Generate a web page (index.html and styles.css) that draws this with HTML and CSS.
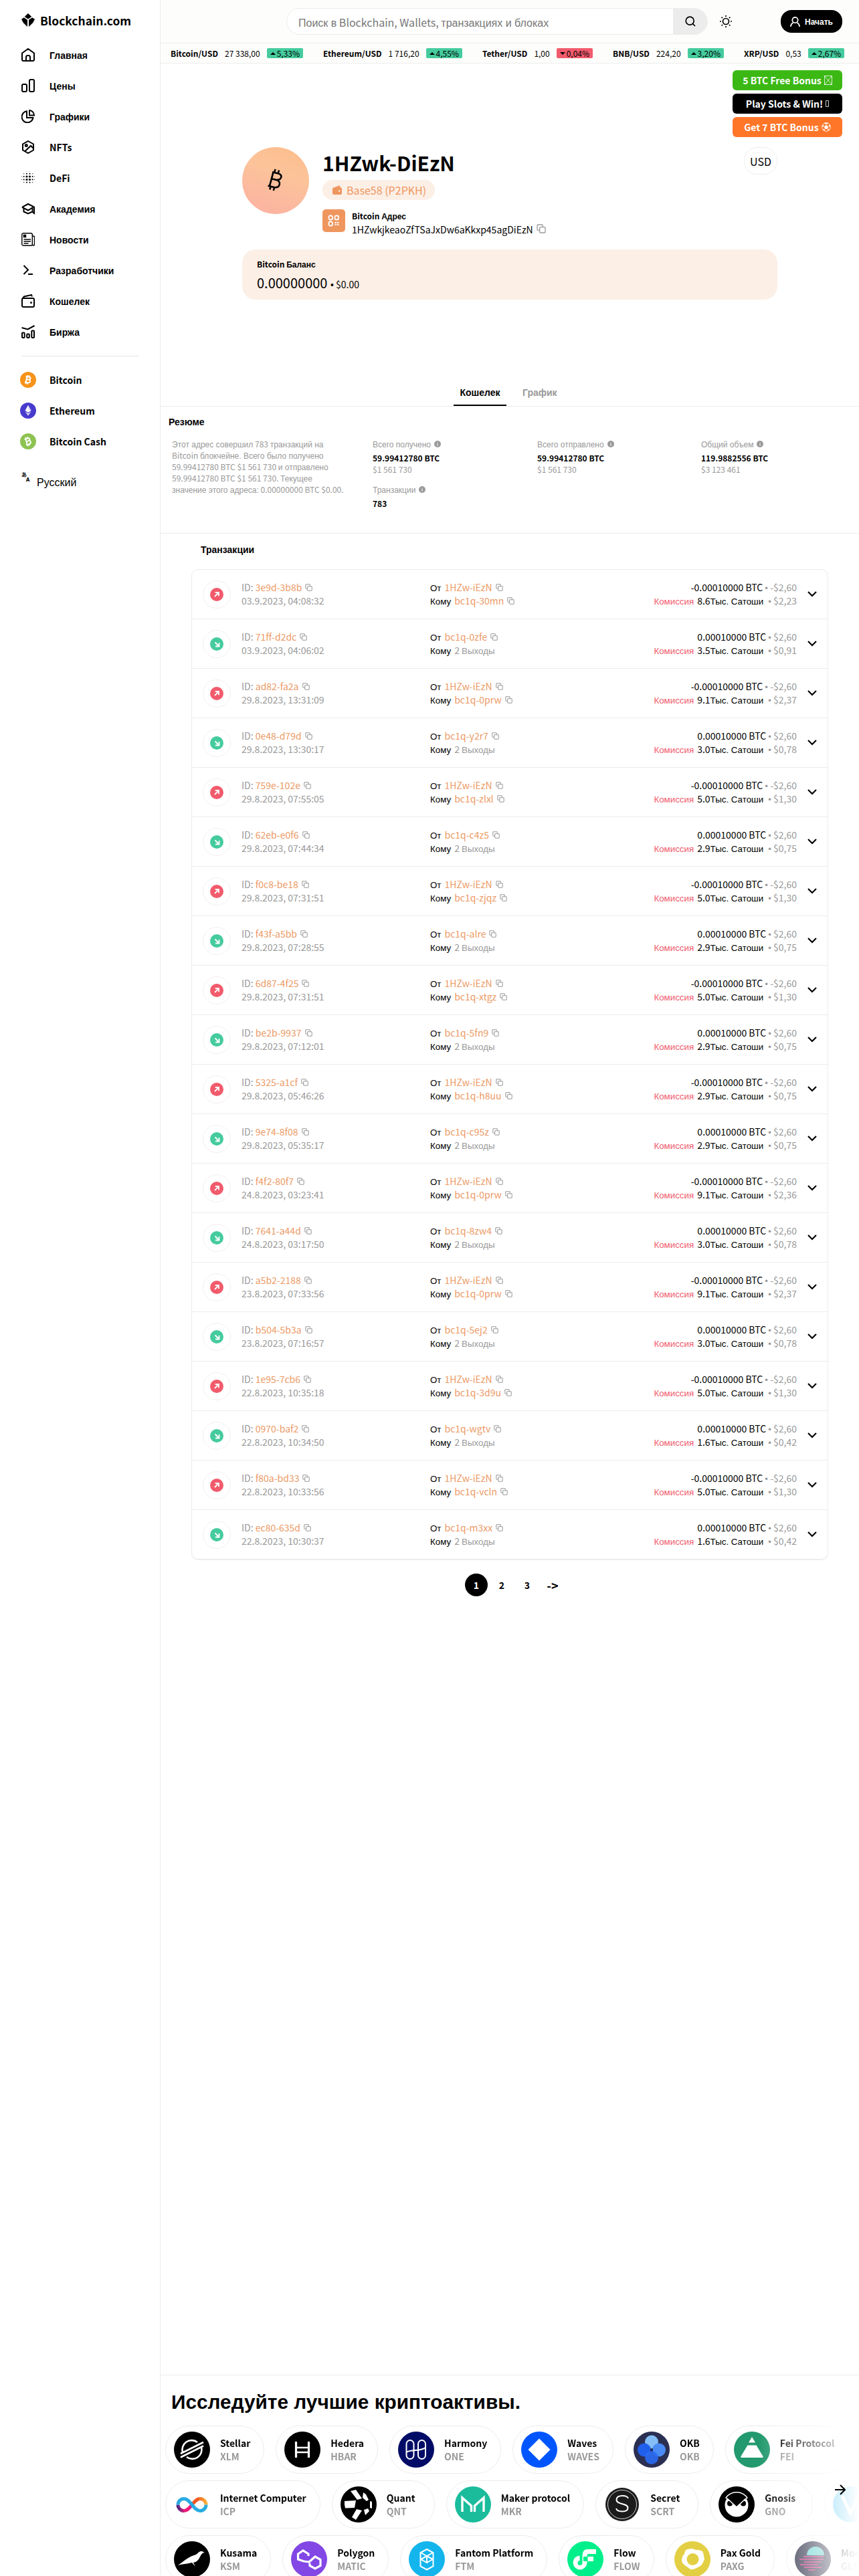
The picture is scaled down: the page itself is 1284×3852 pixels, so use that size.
FILE: index.html
```html
<!DOCTYPE html>
<html lang="ru">
<head>
  <meta charset="UTF-8" />
  <meta name="viewport" content="width=device-width, initial-scale=1" />
  <title>1HZwk-DiEzN | Blockchain.com</title>
  <link rel="stylesheet" href="styles.css">
</head>
<body>

<svg class="sprite" aria-hidden="true">
  <symbol id="copy" viewBox="0 0 14 14"><rect x="4.7" y="4.7" width="8.3" height="8.3" rx="1.2"/><path d="M9.3 4.5V2.2A1.2 1.2 0 0 0 8.1 1H2.2A1.2 1.2 0 0 0 1 2.200V8.1a1.200 1.200 0 0 0 1.200 1.200h2.300"/></symbol>
  <symbol id="info" viewBox="0 0 10 10"><circle cx="5" cy="5" r="5" fill="#999"/><path d="M5 4.500v3M5 2.400v1" stroke="#fff" stroke-width="1.200"/></symbol>
  <symbol id="out" viewBox="0 0 20 20"><circle cx="10" cy="10" r="10" fill="#f15b6c"/><path d="M7 13l6-6M7.700 7H13v5.300" fill="none" stroke="#fff" stroke-width="1.800"/></symbol>
  <symbol id="in" viewBox="0 0 20 20"><circle cx="10" cy="10" r="10" fill="#45cb9e"/><path d="M7.500 7.500l6 6M13.500 8v5.500H8" fill="none" stroke="#fff" stroke-width="1.800"/></symbol>
</svg>

<aside class="sidebar">
  <a class="logo">
    <svg width="20" height="20" viewBox="0 0 20 20"><path d="M10 0l5.300 5L10 8.400 4.700 5zM3.800 6.300L9 9.800V20L2.800 14 0 8.700zM16.200 6.300L20 8.700 17.200 14 11 20V9.800z"/></svg>
    Blockchain.com
  </a>
  <nav class="menu">
    <a><svg viewBox="0 0 20 20"><path d="M1 7.500L10 1l9 6.500V17a2 2 0 0 1-2 2H3a2 2 0 0 1-2-2zM7 19v-6a2.500 2.500 0 0 1 2.500-2h1A2.500 2.500 0 0 1 13 13v6"/></svg><span class="cy">Главная</span></a>
    <a><svg viewBox="0 0 20 20"><rect x="1" y="8" width="7" height="11" rx="2"/><rect x="12" y="1" width="7" height="18" rx="2"/></svg><span class="cy">Цены</span></a>
    <a><svg viewBox="0 0 20 20"><path d="M8 2.300A8.500 8.500 0 1 0 17.500 12H8zM12 1v7.500h7A7.500 7.500 0 0 0 12 1z"/></svg><span class="cy">Графики</span></a>
    <a><svg viewBox="0 0 20 20"><path d="M10 1l8 4.500v9L10 19l-8-4.500v-9zM5 16.500L14 8l4 4"/><circle cx="7.300" cy="7.500" r="1.500"/></svg>NFTs</a>
    <a><svg viewBox="0 0 20 20" class="solid"><circle cx="8" cy="8" r="1.600"/><circle cx="12.500" cy="8" r="1.600"/><circle cx="8" cy="12.500" r="1.600"/><circle cx="12.500" cy="12.500" r="1.600"/><circle cx="3.700" cy="8" r="1"/><circle cx="3.700" cy="12.500" r="1"/><circle cx="16.700" cy="8" r="1"/><circle cx="16.700" cy="12.500" r="1"/><circle cx="8" cy="3.700" r="1"/><circle cx="12.500" cy="3.700" r="1"/><circle cx="8" cy="16.700" r="1"/><circle cx="12.500" cy="16.700" r="1"/><circle cx="3.700" cy="3.700" r=".6"/><circle cx="16.700" cy="3.700" r=".6"/><circle cx="3.700" cy="16.700" r=".6"/><circle cx="16.700" cy="16.700" r=".6"/><circle cx=".6" cy="8" r=".5"/><circle cx=".6" cy="12.500" r=".5"/><circle cx="19.500" cy="8" r=".5"/><circle cx="19.500" cy="12.500" r=".5"/><circle cx="8" cy=".6" r=".4"/><circle cx="12.500" cy=".6" r=".4"/></svg>DeFi</a>
    <a><svg viewBox="0 0 20 20"><path d="M1 7.800L10 3l9 4.500V17l-2.500-2M1 7.800L10 12.500l6.500-4V16M3.500 10v4.500L10 17.500l6.500-3"/></svg><span class="cy">Академия</span></a>
    <a><svg viewBox="0 0 20 20" class="thin"><rect x=".8" y=".8" width="15.500" height="18.400" rx="2"/><path d="M16.500 5H18a1.500 1.500 0 0 1 1.500 1.500v11a1.500 1.500 0 0 1-3 0M3.500 10h10.500M3.500 13h10.500M3.500 16h7"/><path d="M3.500 3.500h3v3h-3z" fill="#000"/></svg><span class="cy">Новости</span></a>
    <a><svg viewBox="0 0 20 20"><path d="M3.500 3l6.500 6.500L3.500 16M10 16h7"/></svg><span class="cy">Разработчики</span></a>
    <a><svg viewBox="0 0 20 20"><rect x="1" y="6" width="18" height="13" rx="2"/><path d="M1.500 6.500L4 3.500 15 1l1 2.500"/><circle cx="14.500" cy="12.500" r=".6"/></svg><span class="cy">Кошелек</span></a>
    <a><svg viewBox="0 0 20 20"><rect x="1" y="11.500" width="3.700" height="7.500" rx="1"/><rect x="8.200" y="13.500" width="3.600" height="5.500" rx="1"/><rect x="15.300" y="8.500" width="3.700" height="10.500" rx="1"/><path d="M.5 4l9 2.500L19.500 1"/></svg><span class="cy">Биржа</span></a>
  </nav>
  <nav class="menu chains">
    <a><svg viewBox="0 0 24 24"><circle cx="12" cy="12" r="12" fill="#f7931a"/><path class="b" d="M8.600 6.700l5.200 1c2.800.6 2.300 4-.8 3.800 3.300.4 2.800 5-1 4.800l-5-1M10.300 7.200l-1.700 8.500M9.500 11.200l3.700.4M11.400 5l-.5 2.200M14 5.500l-.5 2.200M8.900 15.800l-.5 2.400M11.500 16.200l-.5 2.400"/></svg>Bitcoin</a>
    <a><svg viewBox="0 0 24 24"><circle cx="12" cy="12" r="12" fill="#473bcd"/><path fill="#fff" d="M12 4l4.500 8L12 14.800 7.500 12z"/><path fill="#d9d7f5" d="M12 4v6.200l4.500 1.800zM7.500 13.200l4.500 2.700 4.500-2.700L12 19.800z"/></svg>Ethereum</a>
    <a><svg viewBox="0 0 24 24"><circle cx="12" cy="12" r="12" fill="#8dc351"/><path class="b" transform="rotate(-27 12 12)" d="M8.600 6.700l5.200 1c2.800.6 2.300 4-.8 3.800 3.300.4 2.800 5-1 4.800l-5-1M10.300 7.200l-1.700 8.500M9.500 11.200l3.700.4M11.400 5l-.5 2.200M14 5.500l-.5 2.200M8.900 15.800l-.5 2.400M11.500 16.200l-.5 2.400"/></svg>Bitcoin Cash</a>
  </nav>
  <div class="lang">
    <span class="lang-icon"><i>あ</i><b>A</b></span>
    <span class="lang-name">Русский</span>
  </div>
</aside>

<main class="main">
  <header class="topbar">
    <div class="search">
      <span class="search-text"><span class="cy">Поиск в</span> Blockchain, Wallets, <span class="cy">транзакциях и блоках</span></span>
      <span class="search-btn"><svg width="16" height="16" viewBox="0 0 16 16"><circle cx="7.200" cy="7.200" r="6"/><path d="M11.600 11.600L15 15"/></svg></span>
    </div>
    <svg class="sun" width="18" height="18" viewBox="0 0 18 18"><circle cx="9" cy="9" r="4.500"/><path d="M9 0v2M9 16v2M0 9h2M16 9h2M2.600 2.600L4 4M14 14l1.400 1.400M15.400 2.600L14 4M4 14l-1.400 1.400"/></svg>
    <a class="start"><svg width="15" height="15" viewBox="0 0 15 15"><circle cx="7.500" cy="5" r="4.200"/><path d="M.8 14.800c.3-3 1.700-4.800 3.700-5.800M14.200 14.800c-.3-3-1.700-4.800-3.700-5.800"/></svg><span class="cy">Начать</span></a>
  </header>

  <div class="ticker">
    <span class="tick"><b>Bitcoin/USD</b><span>27 338,00</span><em>5,33%</em></span>
    <span class="tick"><b>Ethereum/USD</b><span>1 716,20</span><em>4,55%</em></span>
    <span class="tick"><b>Tether/USD</b><span>1,00</span><em class="down">0,04%</em></span>
    <span class="tick"><b>BNB/USD</b><span>224,20</span><em>3,20%</em></span>
    <span class="tick"><b>XRP/USD</b><span>0,53</span><em>2,67%</em></span>
  </div>

  <div class="ads">
    <a class="ad green">5 BTC Free Bonus <svg width="12" height="14" viewBox="0 0 12 14"><path d="M.5.5h11v13H.5zM.5.5l11 13M11.500.5l-11 13"/></svg></a>
    <a class="ad black">Play Slots &amp; Win! <svg width="5" height="10" viewBox="0 0 5 10"><path d="M.5.5h4v9h-4z"/></svg></a>
    <a class="ad orange">Get 7 BTC Bonus <svg width="14" height="14" viewBox="0 0 14 14"><circle cx="7" cy="7" r="6.400"/><path fill="#fff" d="M7 4.300l2.700 2-1 3.100H5.300l-1-3.100zM4.500 1.200h5L7 2.800zM.8 5.500l1.900-1.400.1 2.300zM13.200 5.500l-1.900-1.400-.1 2.300zM3 11.800l.4-2 1.500 1.600zM11 11.800l-.4-2-1.500 1.600z"/></svg></a>
  </div>

  <section class="hero">
    <div class="coin"><svg width="26" height="36" viewBox="0 0 26 36"><path d="M8 5.200l9 2.300c7 2 5 9.500-2 9.500M7 15.200l8 2c6.500 2.500 4.500 12-3.500 11l-10-2.500M9.500 5.700L4 26.200M12.500 1l-1.200 4.700M18 2.500l-1.200 4.700M5.500 27l-1.200 4.500M11 28.500l-1.200 4.500"/></svg></div>
    <div class="hero-info">
      <h1>1HZwk-DiEzN</h1>
      <span class="type"><svg width="14" height="14" viewBox="0 0 14 14"><path fill="#ef965f" d="M2 3.500L10.500.3 12 3.500a2 2 0 0 1 2 2V12a2 2 0 0 1-2 2H2a2 2 0 0 1-2-2V5.500a2 2 0 0 1 2-2z"/><circle cx="10" cy="8.500" r="1.200" fill="#fcefe6"/></svg>Base58 (P2PKH)</span>
      <div class="address">
        <span class="qr"><svg width="18" height="18" viewBox="0 0 18 18"><rect x="1.500" y="1.500" width="5.500" height="6" rx="2"/><rect x="10.500" y="1.500" width="5.500" height="6" rx="2"/><rect x="1.500" y="10.500" width="5.500" height="6" rx="2"/><path d="M10.500 12h2.500M14 12h2.500M10.500 15.200h2.500M14 15.200h2.500"/></svg></span>
        <div>
          <b>Bitcoin <span class="cy">Адрес</span></b>
          <p>1HZwkjkeaoZfTSaJxDw6aKkxp45agDiEzN <svg class="copy" width="14" height="14"><use href="#copy"/></svg></p>
        </div>
      </div>
    </div>
    <span class="currency">USD</span>
    <div class="balance">
      <b>Bitcoin <span class="cy">Баланс</span></b>
      <p>0.00000000 <small><span class="cy">•</span> $0.00</small></p>
    </div>
  </section>

  <div class="tabs">
    <a class="tab active">Кошелек</a>
    <a class="tab">График</a>
  </div>

  <section class="summary">
    <h2>Резюме</h2>
    <div class="stats">
      <p class="about"><span class="cy">Этот адрес совершил</span> 783 <span class="cy">транзакций на</span><br>Bitcoin <span class="cy">блокчейне. Всего было получено</span><br>59.99412780 BTC $1 561 730 <span class="cy">и отправлено</span><br>59.99412780 BTC $1 561 730. <span class="cy">Текущее</span><br><span class="cy">значение этого адреса:</span> 0.00000000 BTC $0.00.</p>
      <div class="stat">
        <p><span class="cy">Всего получено</span><svg width="10" height="10"><use href="#info"/></svg></p>
        <b>59.99412780 BTC</b>
        <p>$1 561 730</p>
        <p class="second"><span class="cy">Транзакции</span><svg width="10" height="10"><use href="#info"/></svg></p>
        <b>783</b>
      </div>
      <div class="stat">
        <p><span class="cy">Всего отправлено</span><svg width="10" height="10"><use href="#info"/></svg></p>
        <b>59.99412780 BTC</b>
        <p>$1 561 730</p>
      </div>
      <div class="stat">
        <p><span class="cy">Общий объем</span><svg width="10" height="10"><use href="#info"/></svg></p>
        <b>119.9882556 BTC</b>
        <p>$3 123 461</p>
      </div>
    </div>
  </section>

  <section class="transactions">
    <h2>Транзакции</h2>
    <div id="tx-list"></div>
    <div class="pages">
      <a class="current">1</a><a>2</a><a>3</a><a class="forward">-&gt;</a>
    </div>
  </section>

  <section class="explore">
    <h2>Исследуйте лучшие криптоактивы.</h2>
    <div class="assets" id="assets"></div>
    <svg class="next" width="16" height="16" viewBox="0 0 16 16"><path d="M0 8h15M8 1l7 7-7 7"/></svg>
  </section>
</main>

<script>
  // id, date, other side, fee (thousand satoshi), fee in USD, outgoing
  const transactions = [
    ["3e9d-3b8b", "03.9.2023, 04:08:32", "bc1q-30mn", "8.6", "2,23", true],
    ["71ff-d2dc", "03.9.2023, 04:06:02", "bc1q-0zfe", "3.5", "0,91", false],
    ["ad82-fa2a", "29.8.2023, 13:31:09", "bc1q-0prw", "9.1", "2,37", true],
    ["0e48-d79d", "29.8.2023, 13:30:17", "bc1q-y2r7", "3.0", "0,78", false],
    ["759e-102e", "29.8.2023, 07:55:05", "bc1q-zlxl", "5.0", "1,30", true],
    ["62eb-e0f6", "29.8.2023, 07:44:34", "bc1q-c4z5", "2.9", "0,75", false],
    ["f0c8-be18", "29.8.2023, 07:31:51", "bc1q-zjqz", "5.0", "1,30", true],
    ["f43f-a5bb", "29.8.2023, 07:28:55", "bc1q-alre", "2.9", "0,75", false],
    ["6d87-4f25", "29.8.2023, 07:31:51", "bc1q-xtgz", "5.0", "1,30", true],
    ["be2b-9937", "29.8.2023, 07:12:01", "bc1q-5fn9", "2.9", "0,75", false],
    ["5325-a1cf", "29.8.2023, 05:46:26", "bc1q-h8uu", "2.9", "0,75", true],
    ["9e74-8f08", "29.8.2023, 05:35:17", "bc1q-c95z", "2.9", "0,75", false],
    ["f4f2-80f7", "24.8.2023, 03:23:41", "bc1q-0prw", "9.1", "2,36", true],
    ["7641-a44d", "24.8.2023, 03:17:50", "bc1q-8zw4", "3.0", "0,78", false],
    ["a5b2-2188", "23.8.2023, 07:33:56", "bc1q-0prw", "9.1", "2,37", true],
    ["b504-5b3a", "23.8.2023, 07:16:57", "bc1q-5ej2", "3.0", "0,78", false],
    ["1e95-7cb6", "22.8.2023, 10:35:18", "bc1q-3d9u", "5.0", "1,30", true],
    ["0970-baf2", "22.8.2023, 10:34:50", "bc1q-wgtv", "1.6", "0,42", false],
    ["f80a-bd33", "22.8.2023, 10:33:56", "bc1q-vcln", "5.0", "1,30", true],
    ["ec80-635d", "22.8.2023, 10:30:37", "bc1q-m3xx", "1.6", "0,42", false]
  ];

  const copy = `<svg class="copy" width="11" height="11"><use href="#copy"/></svg>`;

  document.getElementById("tx-list").innerHTML = transactions.map(([id, date, peer, fee, usd, out]) => `
    <div class="tx">
      <span class="tx-icon"><svg width="20" height="20"><use href="#${out ? "out" : "in"}"/></svg></span>
      <div class="tx-id">
        <p>ID: <a>${id}</a>${copy}</p>
        <p>${date}</p>
      </div>
      <div class="tx-peers">
        <p><span class="cy">От</span><a>${out ? "1HZw-iEzN" : peer}</a>${copy}</p>
        <p><span class="cy">Кому</span>${out ? `<a>${peer}</a>${copy}` : `<i>2 <span class="cy">Выходы</span></i>`}</p>
      </div>
      <div class="tx-sum">
        <p>${out ? "-" : ""}0.00010000 BTC <i><span class="cy">•</span> ${out ? "-" : ""}$2,60</i></p>
        <p><span class="cy fee">Комиссия</span>${fee}<span class="cy">Тыс. Сатоши</span><i class="gap"><span class="cy">•</span> $${usd}</i></p>
      </div>
      <svg class="chevron" width="14" height="9" viewBox="0 0 14 9"><path d="M1 1l6 6 6-6"/></svg>
    </div>`).join("");

  const disc = color => `<circle cx="27" cy="27" r="27" fill="${color}"/>`;
  const line = (d, w, color = "#fff") => `<path d="${d}" fill="none" stroke="${color}" stroke-width="${w}"/>`;

  const assets = [
    [
      ["Stellar", "XLM", disc("#000") + line("M13 31a14 14 0 0 1 22-15M41 23a14 14 0 0 1-22 15", 2.6) + line("M10 33L44 16M10 38.500L44 21.500", 2.6)],
      ["Hedera", "HBAR", disc("#000") + line("M17.500 15v24M36.500 15v24", 3.2) + line("M17 24h20M17 31h20", 2.4)],
      ["Harmony", "ONE", disc("#000c66") + `<rect x="12.500" y="13" width="11" height="28" rx="5.500" fill="none" stroke="#fff" stroke-width="2"/><rect x="30" y="13" width="11" height="28" rx="5.500" fill="none" stroke="#fff" stroke-width="2"/>` + line("M12.500 31c6-5 22-1 28.500-7", 2)],
      ["Waves", "WAVES", disc("#0055ff") + `<path d="M27 10.500L43.500 27 27 43.500 10.500 27z" fill="#fff"/>`],
      ["OKB", "OKB", disc("#2b2f52") + `<circle cx="27" cy="15.500" r="10" fill="#85bef6"/><circle cx="38" cy="27.500" r="10" fill="#4a8cf4"/><circle cx="16" cy="27.500" r="10" fill="#205fec"/><circle cx="27" cy="39" r="10" fill="#2a6bf3" opacity=".9"/><path d="M25 25.500h4v4h-4z" fill="#22315f"/>`],
      ["Fei Protocol", "FEI", disc("#22996e") + `<path d="M27 8l5 8.500H22zM20.500 20.500h13l10 16.500a1.200 1.200 0 0 1-1 2H11.500a1.200 1.200 0 0 1-1-2z" fill="#fff"/>`]
    ],
    [
      ["Internet Computer", "ICP", `<linearGradient id="icp1"><stop stop-color="#522785"/><stop offset=".5" stop-color="#ed1e79"/></linearGradient><linearGradient id="icp2"><stop offset=".4" stop-color="#f15a24"/><stop offset="1" stop-color="#fbb03b"/></linearGradient>` + line("M27 27.500c-4 5-7 9-12 9a9 9 0 0 1-9-9", 5, "url(#icp1)") + line("M27 27.500c4-5 7-9 12-9a9 9 0 0 1 9 9", 5, "url(#icp2)") + line("M6 27.500a9 9 0 0 1 9-9c10 0 14 18 24 18a9 9 0 0 0 9-9", 5, "#29abe2")],
      ["Quant", "QNT", disc("#000") + `<path d="M6 22l17-1-2 11-14 .5a28 28 0 0 1-1-10.500zM15 7l8-2 9 13-7 2zM34 9l4 3 4 8-3 2-6-5zM44 22l3 1v10l-3-1zM24 34l8 2-9 14-6-4zM35 35l6-2 2 4-6 6z" fill="#fff"/>`],
      ["Maker protocol", "MKR", disc("#1abc9c") + line("M11 38V17l13.500 12v9M43 38V17L29.500 29v9", 3.4)],
      ["Secret", "SCRT", `<circle cx="27" cy="27" r="25" fill="#1b1b1b"/><circle cx="27" cy="27" r="21.500" fill="none" stroke="#fff" stroke-width=".8"/>` + line("M36 18c-1-3-4-4-8.500-4-6 0-9 2.500-9 6 0 8 17 4.500 17 12 0 4-4 5.500-8.500 5.500S19 36 18 33", 2)],
      ["Gnosis", "GNO", disc("#000") + `<circle cx="27" cy="28" r="17.500" fill="#fff"/><path d="M11 17c8-11 24-11 32 0L27 31z" stroke="#fff" stroke-width="1.500"/><circle cx="17" cy="25.500" r="4"/><circle cx="37" cy="25.500" r="4"/>` + line("M13 18L27 31l14-13", 1.5)],
      ["VeChain", "VET", disc("#38bdf2") + line("M14 14l12 26L39 14", 5)]
    ],
    [
      ["Kusama", "KSM", disc("#000") + `<path d="M6 36c8-5 14-12 24-15 5-1 6-5 10-6 3-.5 4 1 6 2-4 0-5 3-7 6-2 5-5 8-10 9l3 6-5-6C19 34 13 34 6 36z" fill="#fff"/>`],
      ["Polygon", "MATIC", disc("#8247e5") + line("M27 31l-8-1-8.500-3v-8l7.500-5 8 5v3M26 32l10-9 8 4.500v9L36 41l-8-4.500V33", 3.2)],
      ["Fantom Platform", "FTM", disc("#13b5ec") + line("M27 12l9.500 5v20.500L27 42.500l-9.500-5V17zM18 17l18 10.500M36 17L18 27.500M27 22v10l-9-5M27 32l9-5M18 27l9-5 9 5", 2)],
      ["Flow", "FLOW", disc("#00ef8b") + `<path d="M30 12h13v7H32a2.500 2.500 0 0 0-2.500 2.500V23H39v7h-9.500v2a10.500 10.500 0 1 1-11-10.500V29a3.500 3.500 0 1 0 4 3.500V23c0-7 2-11 7.500-11z" fill="#fff"/><path d="M24 23h6.500v7H24z" fill="#00ef8b"/>`],
      ["Pax Gold", "PAXG", disc("#e3cf44") + `<path d="M20 12c6-1 7-1 12 1 6 0 10 1 11 4l2 10c-2 4-2 6-6 10-6 3-10 6-15 5-4-4-9-5-12-10-2-5 0-10 3-13 1-4 1-6 5-7z" fill="#fff"/><circle cx="27.500" cy="27" r="9" fill="#e3cf44"/>`],
      ["Moonbeam", "GLMR", disc("#1b1d37") + `<path d="M18 21a13 13 0 0 1 26 0z" fill="#53cbc9"/>` + line("M13 23h30M7 27h36M14 31h26M8 35h27M14 39h26M20 43h10", 1.5, "#e1147b")]
    ]
  ];

  document.getElementById("assets").innerHTML = assets.map(row => `
    <div class="asset-row">${row.map(([name, symbol, art]) => `
      <a class="asset">
        <svg width="54" height="54" viewBox="0 0 54 54">${art}</svg>
        <span><b>${name}</b><b class="symbol">${symbol}</b></span>
      </a>`).join("")}
    </div>`).join("");
</script>

</body>
</html>
```
FILE: styles.css
```css
* {
  box-sizing: border-box;
}

body {
  margin: 0;
  display: flex;
  height: 3852px;
  overflow: hidden;
  background: #fff;
  color: #000;
  font-family: "Noto Sans CJK SC", "Liberation Sans", sans-serif;
  font-size: 14px;
}

h1, h2, p {
  margin: 0;
}
i, em {
  font-style: normal;
}
.sprite {
  display: none;
}
.cy {
  font-family: "Liberation Sans", Arial, sans-serif;
  line-height: 1;
}
.copy {
  fill: none;
  stroke: #999;
  stroke-width: 1.3;
}

/* sidebar */
.sidebar {
  width: 240px;
  flex: none;
  padding: 20px 32px;
  border-right: 1px solid #ececec;
}
.logo {
  display: flex;
  align-items: center;
  gap: 8px;
  height: 20px;
  font-size: 17.4px;
  font-weight: bold;
}
.menu {
  display: flex;
  flex-direction: column;
  gap: 22px;
  margin-top: 30px;
}
.menu a {
  display: flex;
  align-items: center;
  gap: 22px;
  height: 24px;
  font-weight: bold;
}
.menu .cy {
  padding-top: 2px;
}
.menu svg {
  width: 20px;
  height: 20px;
  fill: none;
  stroke: #000;
  stroke-width: 2;
}
.menu svg.thin {
  stroke-width: 1.4;
}
.menu svg.solid {
  fill: #000;
  stroke: none;
}
.chains {
  width: 176px;
  margin-top: 24px;
  padding-top: 23px;
  border-top: 1px solid #e6e6e6;
}
.chains a {
  margin-left: -2px;
  gap: 20px;
}
.chains svg {
  width: 24px;
  height: 24px;
  stroke: none;
}
.chains .b {
  stroke: #fff;
  stroke-width: 1.9;
}
.lang {
  display: flex;
  gap: 10px;
  margin-top: 34px;
}
.lang-name {
  font: 16px/32px "Liberation Sans", Arial, sans-serif;
}
.lang-icon {
  display: flex;
  width: 13px;
  height: 14px;
  font-size: 8px;
  font-weight: bold;
  line-height: 8px;
}
.lang-icon b {
  margin: 6px 0 0 -1px;
  line-height: 9px;
}

/* header */
.main {
  flex: 1;
  min-width: 0;
  display: flex;
  flex-direction: column;
}
.topbar {
  display: flex;
  align-items: center;
  height: 65px;
  padding: 0 25px 0 188px;
  background: #fdfdfb;
  border-bottom: 1px solid #ececec;
}
.search {
  display: flex;
  width: 630px;
  height: 40px;
  border: 1px solid #ececec;
  border-radius: 20px;
  overflow: hidden;
  background: #fff;
  color: #777;
  font-size: 16px;
}
.search-text {
  flex: 1;
  padding-left: 17px;
  line-height: 41px;
}
.search-btn {
  display: flex;
  align-items: center;
  justify-content: center;
  width: 51px;
  background: #ececec;
}
.search-btn svg, .sun, .start svg {
  fill: none;
  stroke: #000;
  stroke-width: 1.7;
}
.sun {
  margin-left: 18px;
}
.start {
  display: flex;
  align-items: center;
  justify-content: center;
  gap: 7px;
  width: 92px;
  height: 34px;
  margin-left: auto;
  border-radius: 16px;
  background: #000;
  color: #fff;
  font-size: 12px;
  font-weight: bold;
}
.start .cy {
  padding-top: 2px;
}
.start svg {
  stroke: #fff;
}
.ticker {
  display: flex;
  align-items: center;
  gap: 30px;
  height: 30px;
  padding-left: 15px;
  background: #fdfdfb;
  border-bottom: 1px solid #ececec;
  font-size: 12px;
  white-space: nowrap;
}
.tick {
  display: flex;
  align-items: center;
  gap: 10px;
}
.tick em {
  display: flex;
  align-items: center;
  height: 15px;
  padding: 0 5px;
  border-radius: 2px;
  background: #45cb9e;
}
.tick em::before {
  content: "";
  margin-right: 2px;
  border: 4px solid transparent;
  border-top: 0;
  border-bottom: 4px solid #000;
}
.tick em.down {
  background: #f15b6c;
}
.tick em.down::before {
  border-top: 4px solid #000;
  border-bottom: 0;
}

.ads {
  display: flex;
  flex-direction: column;
  align-items: flex-end;
  gap: 5px;
  padding: 10px 25px 0 0;
}
.ad {
  display: flex;
  align-items: center;
  justify-content: center;
  gap: 4px;
  width: 164px;
  height: 30px;
  border-radius: 6px;
  color: #fff;
  font-weight: bold;
}
.ad svg {
  fill: none;
  stroke: #fff;
  stroke-width: .8;
}
.green {
  background: #3cb815;
}
.black {
  background: #000;
}
.orange {
  background: #ff7629;
}

/* address */
.hero {
  display: grid;
  grid-template-columns: 100px 1fr auto;
  column-gap: 20px;
  width: 800px;
  height: 349px;
  margin: 15px 0 0 122px;
  align-content: start;
}
.coin {
  display: flex;
  align-items: center;
  justify-content: center;
  width: 100px;
  height: 100px;
  border-radius: 50%;
  background: linear-gradient(20deg, #fbb0a3, #fcc39a 60%, #fdbd8b);
}
.coin svg {
  fill: none;
  stroke: #000;
  stroke-width: 2.6;
}
.hero-info {
  height: 153px;
}
h1 {
  margin-bottom: 2px;
  font-size: 30px;
  line-height: 47px;
}
.type {
  display: flex;
  align-items: center;
  gap: 7px;
  width: 168px;
  height: 30px;
  padding-left: 15px;
  border-radius: 15px;
  background: #fcefe6;
  color: #ef965f;
  font-size: 16px;
}
.address {
  display: flex;
  gap: 10px;
  margin-top: 14px;
}
.address b, .balance b {
  display: block;
  font-size: 12px;
  line-height: 19px;
}
.address p {
  line-height: 22px;
}
.address .copy {
  margin-left: 2px;
}
.qr {
  display: flex;
  align-items: center;
  justify-content: center;
  width: 34px;
  height: 34px;
  border-radius: 5px;
  background: #ef965f;
}
.qr svg {
  fill: none;
  stroke: #fff;
  stroke-width: 1.8;
}
.currency {
  width: 50px;
  height: 41px;
  border: 1px solid #efefef;
  border-radius: 20px;
  text-align: center;
  font-size: 16px;
  line-height: 40px;
}
.balance {
  grid-column: 1 / -1;
  height: 75px;
  padding: 12px 22px;
  border-radius: 20px;
  background: #fcefe6;
}
.balance p {
  font-size: 20px;
  line-height: 37px;
}
.balance small {
  font-size: 14px;
}

.tabs {
  display: flex;
  gap: 13px;
  height: 39px;
  padding-left: 438px;
  border-bottom: 1px solid #ececec;
  font-family: "Liberation Sans", Arial, sans-serif;
  font-weight: bold;
  line-height: 36px;
}
.tab {
  min-width: 79px;
  padding: 0 11px;
  color: #999;
}
.tab.active {
  padding: 0;
  color: #000;
  text-align: center;
  border-bottom: 2px solid #000;
}

/* summary */
h2 {
  font-family: "Liberation Sans", Arial, sans-serif;
  font-size: 14px;
  line-height: 20px;
}
.summary {
  height: 190px;
  padding: 13px 12px 0;
  border-bottom: 1px solid #ececec;
}
.stats {
  display: grid;
  grid-template-columns: 300px 246px 245px auto;
  margin: 14px 0 0 5px;
  color: #999;
  font-size: 12px;
  line-height: 17px;
}
.stat svg {
  margin-left: 5px;
}
.stat b {
  display: block;
  margin-top: 4px;
  color: #000;
}
.stat .second {
  margin-top: 13px;
}

/* transactions */
.transactions {
  height: 2753px;
  padding: 14px 46px 0;
}
.transactions h2 {
  padding-left: 14px;
}
#tx-list {
  width: 952px;
  margin-top: 19px;
  border: 1px solid #ececec;
  border-radius: 10px;
}
.tx {
  display: flex;
  align-items: center;
  height: 74px;
  padding: 0 16px;
  border-bottom: 1px solid #ececec;
  line-height: 20px;
  color: #999;
}
.tx:last-child {
  border-radius: 0 0 10px 10px;
}
.tx > div {
  padding-bottom: 2px;
}
.tx p {
  height: 20px;
}
.tx .cy {
  font-size: 13.333px;
}
.tx a {
  color: #ec9a66;
}
.tx .copy {
  margin-left: 5px;
}
.tx-icon {
  display: flex;
  align-items: center;
  justify-content: center;
  width: 42px;
  height: 42px;
  border: 1px solid #f6eeee;
  border-radius: 50%;
}
.tx-id {
  width: 282px;
  margin-left: 16px;
}
.tx-peers > p > .cy {
  margin-right: 5px;
  color: #000;
}
.tx-sum {
  margin-left: auto;
  text-align: right;
  color: #000;
}
.tx-sum i {
  color: #999;
}
.tx-sum .gap {
  margin-left: 7px;
}
.tx .fee {
  margin-right: 5px;
  color: #f15b6c;
}
.chevron {
  margin-left: 16px;
  fill: none;
  stroke: #000;
  stroke-width: 2.2;
}
.pages {
  display: flex;
  gap: 4px;
  margin: 20px 0 0 409px;
}
.pages a {
  width: 34px;
  height: 34px;
  border-radius: 50%;
  text-align: center;
  font-weight: bold;
  line-height: 34px;
}
.pages .current {
  background: #000;
  color: #fff;
}
.pages .forward {
  font-size: 18px;
}

/* explore */
.explore {
  position: relative;
  height: 301px;
  padding: 22px 0 0 7px;
  border-top: 1px solid #ececec;
  overflow: hidden;
}
.explore h2 {
  padding-left: 9px;
  font-size: 29.8px;
  line-height: 36px;
}
.assets {
  display: flex;
  flex-direction: column;
  gap: 10px;
  margin-top: 17px;
  -webkit-mask-image: linear-gradient(to left, transparent, #000 150px);
  mask-image: linear-gradient(to left, transparent, #000 150px);
}
.asset-row {
  display: flex;
  gap: 17px;
}
.asset-row:nth-child(2) .asset {
  min-width: 154px;
}
.asset {
  display: flex;
  flex: none;
  align-items: center;
  gap: 15px;
  height: 72px;
  padding: 0 20px 0 12px;
  border: 1px solid #ececec;
  border-radius: 36px;
}
.asset b {
  display: block;
  line-height: 20px;
  white-space: nowrap;
}
.asset .symbol {
  color: #999;
}
.next {
  position: absolute;
  right: 20px;
  top: 163px;
  fill: none;
  stroke: #000;
  stroke-width: 2;
}
```
